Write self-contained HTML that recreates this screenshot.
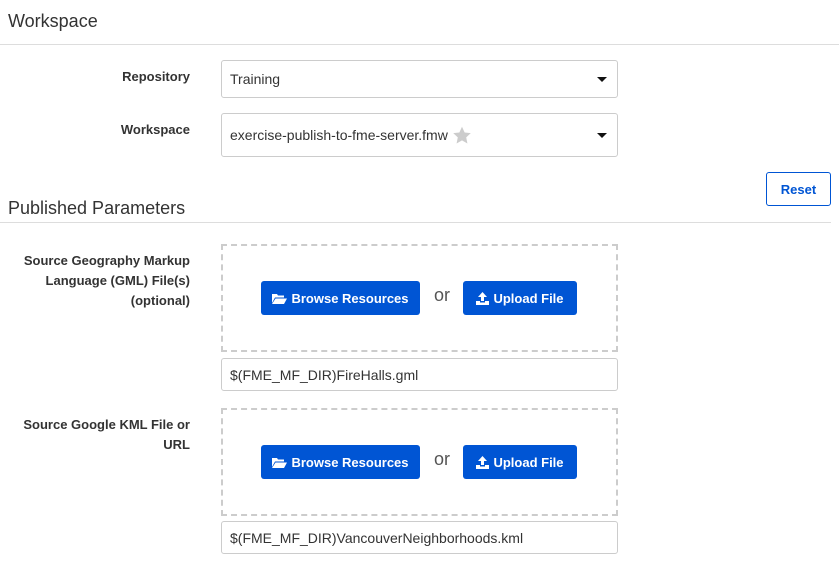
<!DOCTYPE html>
<html><head><meta charset="utf-8"><style>
*{box-sizing:border-box;margin:0;padding:0}
body{width:839px;height:568px;background:#fff;font-family:"Liberation Sans",sans-serif;color:#333;position:relative;overflow:hidden}
.abs{position:absolute}
.h{font-size:18px;color:#333}
.line{height:1px;background:#ddd}
.lbl{font-weight:bold;font-size:13px;color:#333;text-align:right;width:180px;left:10px;line-height:20px}
.sel{left:221px;width:397px;border:1px solid #ccc;border-radius:3px;font-size:14px;padding-left:8px;display:flex;align-items:center;color:#333}
.sel .car{position:absolute;right:10px;top:50%;margin-top:-2px;border-left:5px solid transparent;border-right:5px solid transparent;border-top:5px solid #111}
.drop{left:221px;width:397px;height:108px;border:2px dashed #ccc}
.btn{background:#0055d4;color:#fff;font-weight:bold;font-size:13px;border-radius:3px;display:flex;align-items:center;justify-content:center;height:34px}
.or{font-size:18px;color:#555}
.inp{left:221px;width:397px;height:33px;border:1px solid #ccc;border-radius:3px;font-size:14px;padding-left:8px;display:flex;align-items:center}
svg{margin-right:4px}
</style></head><body>
<div class="abs h" style="left:8px;top:11px">Workspace</div>
<div class="abs line" style="left:0;top:44px;width:839px"></div>

<div class="abs lbl" style="top:67px">Repository</div>
<div class="abs sel" style="top:60px;height:38px">Training<span class="car"></span></div>
<div class="abs lbl" style="top:120px">Workspace</div>
<div class="abs sel" style="top:113px;height:44px">exercise-publish-to-fme-server.fmw
<svg width="22" height="21" viewBox="0 0 24 24" style="margin-left:3px"><path d="M12 2l3 6.5 7 .8-5.2 4.8 1.4 7L12 17.5 5.8 21.1l1.4-7L2 9.3l7-.8z" fill="#ccc"/></svg><span class="car"></span></div>

<div class="abs" style="left:766px;top:172px;width:65px;height:34px;border:1px solid #0055d4;border-radius:3px;color:#0055d4;font-weight:bold;font-size:13px;display:flex;align-items:center;justify-content:center">Reset</div>
<div class="abs h" style="left:8px;top:198px">Published Parameters</div>
<div class="abs line" style="left:0;top:222px;width:831px"></div>

<div class="abs lbl" style="top:251px">Source Geography Markup Language (GML) File(s) (optional)</div>
<div class="abs drop" style="top:244px"></div>
<div class="abs btn" style="left:261px;top:281px;width:159px"><svg width="15" height="12" viewBox="0 0 15 12"><path d="M0 2h5l1 1.5h6v2H3L0 11z M3.5 6.5H15L12 12H0z" fill="#fff"/></svg>Browse Resources</div>
<div class="abs or" style="left:434px;top:285px">or</div>
<div class="abs btn" style="left:463px;top:281px;width:114px"><svg width="13" height="13" viewBox="0 0 13 13"><path d="M6.5 0L11 5H8v4H5V5H2z M0 9h4v1.5h5V9h4v4H0z" fill="#fff"/></svg>Upload File</div>
<div class="abs inp" style="top:358px">$(FME_MF_DIR)FireHalls.gml</div>

<div class="abs lbl" style="top:415px">Source Google KML File or URL</div>
<div class="abs drop" style="top:408px"></div>
<div class="abs btn" style="left:261px;top:445px;width:159px"><svg width="15" height="12" viewBox="0 0 15 12"><path d="M0 2h5l1 1.5h6v2H3L0 11z M3.5 6.5H15L12 12H0z" fill="#fff"/></svg>Browse Resources</div>
<div class="abs or" style="left:434px;top:449px">or</div>
<div class="abs btn" style="left:463px;top:445px;width:114px"><svg width="13" height="13" viewBox="0 0 13 13"><path d="M6.5 0L11 5H8v4H5V5H2z M0 9h4v1.5h5V9h4v4H0z" fill="#fff"/></svg>Upload File</div>
<div class="abs inp" style="top:521px">$(FME_MF_DIR)VancouverNeighborhoods.kml</div>
</body></html>
